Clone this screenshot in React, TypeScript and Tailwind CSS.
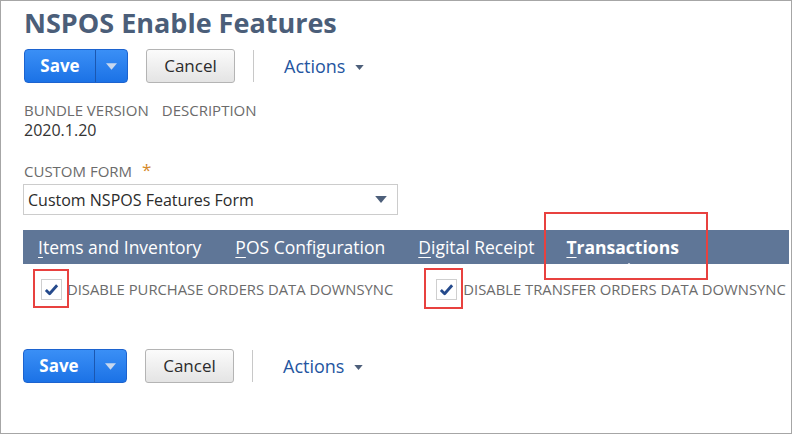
function Caret({ className }: { className: string }) {
  return (
    <svg viewBox="0 0 10 6" className={className}>
      <path d="M0 0h10L5 6z" fill="currentColor" />
    </svg>
  )
}

function ButtonRow() {
  return (
    <div className="flex items-center h-[34px]">
      <div className="flex h-[34px] w-[104px] rounded-[4px] border border-[#1c63cf] bg-gradient-to-b from-[#3a8ff6] to-[#1b72e6] text-white">
        <span className="flex w-[70px] items-center justify-center text-[17px] font-bold">Save</span>
        <span className="flex flex-1 items-center justify-center border-l border-[#1b57b0]">
          <Caret className="w-[11px] h-[9px] text-[#c9d8ee]" />
        </span>
      </div>
      <button className="ml-[18px] h-[34px] w-[89px] rounded-[3px] border border-[#b4b4b4] bg-gradient-to-b from-[#fbfbfb] to-[#e4e4e4] text-[17px] text-[#2b2b2b]">
        Cancel
      </button>
      <div className="ml-[18px] h-[32px] w-px bg-[#c8c8c8]" />
      <div className="ml-[30px] flex items-center gap-[10px] text-[18px] text-[#24559f]">
        <span>Actions</span>
        <Caret className="w-[9px] h-[5px] text-[#4d5f7a] mt-[3px]" />
      </div>
    </div>
  )
}

function Check() {
  return (
    <span className="flex h-[21px] w-[21px] items-center justify-center border border-[#cfcfcf] bg-white">
      <svg viewBox="0 0 16 16" className="w-[15px] h-[15px]">
        <path d="M2 8.5l4 4 8-9" fill="none" stroke="#254a8c" strokeWidth="3" strokeLinejoin="round" />
      </svg>
    </span>
  )
}

export default function App() {
  return (
    <div className="h-[434px] w-[792px] overflow-hidden border border-[#a6a6a6] bg-white pl-[22px] font-['Open_Sans',sans-serif]">
      <h1 className="pt-[4px] text-[27px] leading-[35px] font-bold text-[#4b5e79] pl-px">NSPOS Enable Features</h1>

      <div className="mt-[9px] pl-px">
        <ButtonRow />
      </div>

      <div className="mt-[18px] flex gap-[13px] text-[15px] leading-[18px] text-[#6b6b6b] pl-px">
        <span>BUNDLE VERSION</span>
        <span>DESCRIPTION</span>
      </div>
      <div className="mt-[1px] text-[16px] leading-[20px] text-[#333] pl-px">2020.1.20</div>

      <div className="mt-[22px] flex items-start gap-[10px] text-[15px] leading-[18px] text-[#6b6b6b] pl-px">
        <span>CUSTOM FORM</span>
        <span className="text-[17px] leading-[16px] text-[#d68a2a]">*</span>
      </div>
      <div className="mt-[4px] flex h-[31px] w-[375px] items-center justify-between border border-[#cccccc] pl-[4px] pr-[9px] text-[16px] text-[#2b2b2b]">
        <span>Custom NSPOS Features Form</span>
        <Caret className="w-[14px] h-[7px] text-[#4d5f7a]" />
      </div>

      <div className="mt-[15px] mr-[2px] flex h-[34px] items-center bg-[#5f7697] text-[17.5px] text-white whitespace-nowrap">
        <span className="ml-[15px]"><span className="underline underline-offset-[3px]">I</span>tems and Inventory</span>
        <span className="ml-[34px]"><span className="underline underline-offset-[3px]">P</span>OS Configuration</span>
        <span className="ml-[33px]"><span className="underline underline-offset-[3px]">D</span>igital Receipt</span>
        <span className="relative ml-[32px] font-bold">
          <span className="underline underline-offset-[3px]">T</span>ransactions
          <span className="absolute left-1/2 translate-x-[2px] bottom-[-6px] h-0 w-0 border-x-[4px] border-b-[3px] border-x-transparent border-b-white" />
          <span className="absolute left-[-22px] top-[-22px] h-[68px] w-[164px] border-2 border-[#e8413f]" />
        </span>
      </div>

      <div className="mt-[14px] flex items-center text-[14.8px] text-[#6b6b6b] whitespace-nowrap">
        <span className="relative ml-[18px] shrink-0">
          <Check />
          <span className="absolute left-[-8px] top-[-10px] h-[39px] w-[36px] border-2 border-[#e8413f]" />
        </span>
        <span className="ml-[5px]">DISABLE PURCHASE ORDERS DATA DOWNSYNC</span>
        <span className="relative ml-[43px] shrink-0">
          <Check />
          <span className="absolute left-[-12px] top-[-11px] h-[41px] w-[39px] border-2 border-[#e8413f]" />
        </span>
        <span className="ml-[6px]">DISABLE TRANSFER ORDERS DATA DOWNSYNC</span>
      </div>

      <div className="mt-[49px]">
        <ButtonRow />
      </div>
    </div>
  )
}
